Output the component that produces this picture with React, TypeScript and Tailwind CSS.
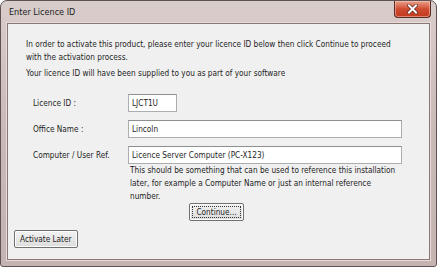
import React from "react";

const font = { fontFamily: '"DejaVu Sans Condensed", "DejaVu Sans", Tahoma, sans-serif' };

function Field({ label, value, wide = true }: { label: string; value: string; wide?: boolean }) {
  return (
    <div className="flex items-center">
      <div className="w-[102px] pl-[7px] text-[8.2px]">{label}</div>
      <div
        className={`${wide ? "w-[274px]" : "w-[49px]"} h-[18px] border border-[#abadb3] border-t-[#8e8f8f] bg-white pl-[3px] text-[8.2px] leading-[16px]`}
      >
        {value}
      </div>
    </div>
  );
}

function WinButton({ children, focused = false }: { children: React.ReactNode; focused?: boolean }) {
  return (
    <div className="h-[18px] border border-[#707070] rounded-[2px] bg-gradient-to-b from-[#f2f2f2] to-[#dcdcdc] p-[2px] shadow-[inset_0_0_0_1px_#fcfcfc]">
      <div
        className={`h-full px-[3px] text-[8.2px] leading-[11px] flex items-center ${focused ? "border border-dotted border-[#333]" : ""}`}
      >
        {children}
      </div>
    </div>
  );
}

export default function App() {
  return (
    <div className="w-[437px] h-[267px] bg-white" style={font}>
      <div className="w-[437px] h-[267px] rounded-t-[7px] rounded-b-[3px] border border-[#5e5352] bg-gradient-to-b from-[#d9cdcb] via-[#c9b9b7] to-[#c4b3b1] flex flex-col px-[6px] pb-[6px] text-[#1e1e1e]">
        <div className="h-[22px] flex items-start justify-between">
          <div className="pt-[5px] pl-[2px] text-[9px] text-[#1a1a1a]">Enter Licence ID</div>
          <div className="mr-[-1px] w-[37px] h-[17px] rounded-b-[4px] border border-[#5a2a24] border-t-0 bg-gradient-to-b from-[#e8a08c] via-[#cf4b30] to-[#c2381f] flex items-center justify-center shadow-[inset_0_0_0_1px_rgba(255,210,200,0.5)]">
            <svg width="11" height="10" viewBox="0 0 11 10">
              <path d="M2 1.5 L9 8.5 M9 1.5 L2 8.5" stroke="#5a2520" strokeWidth="3.4" strokeLinecap="square" />
              <path d="M2 1.5 L9 8.5 M9 1.5 L2 8.5" stroke="#ffffff" strokeWidth="2" strokeLinecap="square" />
            </svg>
          </div>
        </div>
        <div className="flex-1 border border-[#8a7674] shadow-[0_0_0_1px_#e6dcda] bg-[#f0f0f0] flex flex-col">
          <div className="pl-[18px] pt-[14px] text-[8.2px] leading-[13px]">
            <div>
              In order to activate this product, please enter your licence ID below then click Continue to proceed
              <br />
              with the activation process.
            </div>
            <div className="mt-[3px]">Your licence ID will have been supplied to you as part of your software</div>
          </div>
          <div className="pl-[18px] mt-[14px] flex flex-col gap-[8px]">
            <Field label="Licence ID :" value="LJCT1U" wide={false} />
            <Field label="Office Name :" value="Lincoln" />
            <div>
              <Field label="Computer / User Ref." value="Licence Server Computer (PC-X123)" />
              <div className="ml-[104px] w-[272px] text-[8.2px] leading-[13px]">
                This should be something that can be used to reference this installation later, for example a Computer Name or just an internal reference number.
              </div>
            </div>
          </div>
          <div className="flex justify-center pr-[4px]">
            <WinButton focused>Continue...</WinButton>
          </div>
          <div className="flex pl-[6px] mt-[9px]">
            <WinButton>Activate Later</WinButton>
          </div>
        </div>
      </div>
    </div>
  );
}
